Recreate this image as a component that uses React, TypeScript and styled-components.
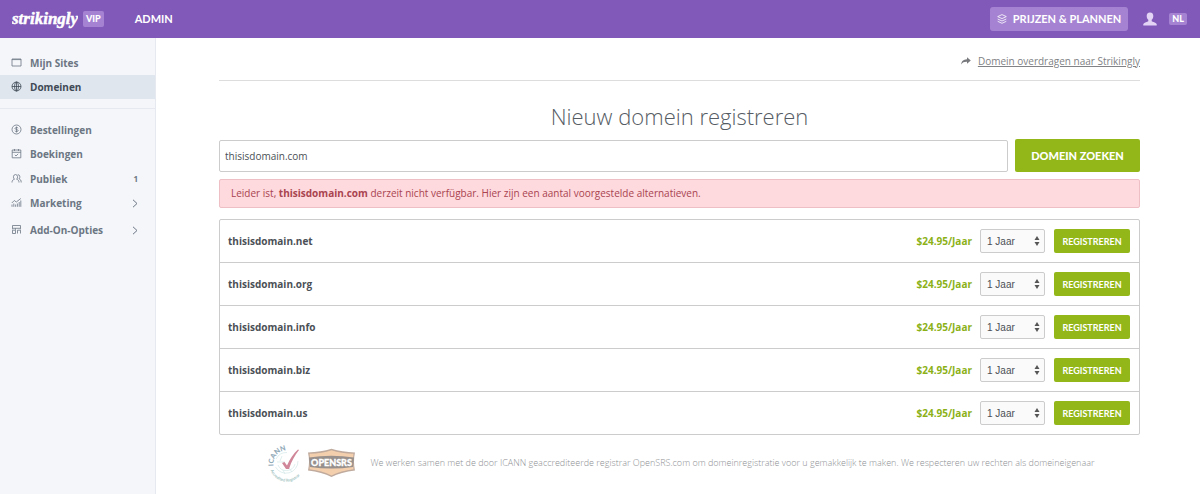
import React from 'react';
import styled, { createGlobalStyle } from 'styled-components';

const GlobalStyle = createGlobalStyle`
  *, *::before, *::after { box-sizing: border-box; }
  body {
    margin: 0;
    background: #fff;
    color: #4b5056;
    font: 400 10px/16px 'Open Sans', 'Noto Sans', sans-serif;
  }
  button, input, select { font: inherit; }
  a { color: inherit; text-decoration: none; }
`;

const Page = styled.div`
  display: flex;
  flex-direction: column;
  min-height: 100vh;
`;

const Header = styled.header`
  display: flex;
  align-items: center;
  height: 38px;
  padding: 0 13px 0 12px;
  background: #8159b8;
  color: #fff;
  font-family: Lato, sans-serif;
  font-weight: 700;
`;

const Logo = styled.a`
  display: flex;
  margin-right: 5px;
`;

const Tag = styled.span<{ $small?: boolean }>`
  padding: 0 3px;
  border-radius: 2px;
  background: #a583d2;
  font-size: 9px;
  font-weight: 900;
  line-height: ${p => (p.$small ? 12 : 16)}px;
`;

const AdminLink = styled.a`
  margin: 0 auto 0 31px;
  font-size: 11px;
`;

const PlansButton = styled.button`
  display: flex;
  align-items: center;
  gap: 6px;
  height: 24px;
  margin-right: 15px;
  padding: 0 7px;
  border: 0;
  border-radius: 3px;
  background: #a583d2;
  color: #fff;
  font-size: 11px;
  white-space: nowrap;
`;

const UserButton = styled.button`
  display: flex;
  margin-right: 12px;
  padding: 0;
  border: 0;
  background: none;
`;

const Body = styled.div`
  display: flex;
  flex: 1;
`;

const Sidebar = styled.nav`
  flex: none;
  width: 156px;
  padding-top: 13px;
  border-right: 1px solid #e6e9ef;
  background: #f4f6fa;
`;

const NavGroup = styled.div<{ $gap?: number; $divided?: boolean }>`
  margin-top: ${p => p.$gap ?? 0}px;
  padding-top: ${p => (p.$divided ? 9 : 0)}px;
  border-top: ${p => (p.$divided ? '1px solid #e6e9ef' : '0')};
`;

const NavItem = styled.a<{ $active?: boolean }>`
  display: flex;
  align-items: center;
  height: 24px;
  padding: 0 17px 0 11px;
  background: ${p => (p.$active ? '#dfe6ee' : 'transparent')};
  color: ${p => (p.$active ? '#3f4a56' : '#6c7683')};
  font-weight: 700;
  svg { flex: none; }
`;

const NavGlyph = styled.svg`
  margin-bottom: 2px;
`;

const NavLabel = styled.span`
  flex: 1;
  margin-left: 8px;
`;

const NavCount = styled.span`
  font-size: 8px;
`;

const Main = styled.main`
  flex: 1;
  min-width: 0;
  padding: 13px 60px 12px 63px;
`;

const TransferBar = styled.div`
  display: flex;
  justify-content: flex-end;
  align-items: center;
  gap: 7px;
  height: 30px;
  padding-bottom: 10px;
  border-bottom: 1px solid #ddd;
  color: #808285;
  a { text-decoration: underline; }
`;

const Title = styled.h1`
  margin: 20px 0 8px;
  color: #565c64;
  font-size: 22px;
  font-weight: 300;
  line-height: 30px;
  text-align: center;
`;

const SearchForm = styled.form`
  display: flex;
  align-items: center;
  gap: 7px;
`;

const SearchInput = styled.input`
  flex: 1;
  min-width: 0;
  height: 32px;
  padding: 0 5px;
  border: 1px solid #ccc;
  border-radius: 2px;
  color: #4b5056;
`;

const GreenButton = styled.button<{ $large?: boolean }>`
  flex: none;
  width: ${p => (p.$large ? 125 : 76)}px;
  height: ${p => (p.$large ? 33 : 24)}px;
  padding: 0;
  border: 0;
  border-radius: 2px;
  background: #93b719;
  color: #fff;
  font: ${p => (p.$large ? '900 11px' : '700 9px')} Lato, sans-serif;
`;

const Alert = styled.p`
  margin: 7px 0 11px;
  padding: 5px 11px 6px;
  border: 1px solid #eec0c5;
  border-radius: 2px;
  background: #fed9de;
  color: #a94450;
`;

const Results = styled.ul`
  margin: 0;
  padding: 0;
  border: 1px solid #ccc;
  border-radius: 2px;
  list-style: none;
`;

const ResultRow = styled.li`
  display: flex;
  align-items: center;
  height: 43px;
  padding: 0 9px 0 8px;
  border-top: 1px solid #ccc;
  &:first-child {
    height: 42px;
    border-top: 0;
  }
`;

const DomainName = styled.strong`
  flex: 1;
`;

const Price = styled.span`
  margin-right: 8px;
  color: #8cb118;
  font-weight: 700;
`;

const SelectBox = styled.span`
  position: relative;
  display: flex;
  margin-right: 9px;
  svg {
    position: absolute;
    top: 7px;
    right: 5px;
    pointer-events: none;
  }
`;

const YearSelect = styled.select`
  appearance: none;
  width: 65px;
  height: 24px;
  padding: 0 6px;
  border: 1px solid #ccc;
  border-radius: 2px;
  background: #fafafa;
  color: #4b5056;
  font: 10px 'Liberation Sans', sans-serif;
`;

const Partners = styled.footer`
  display: flex;
  justify-content: center;
  align-items: center;
  margin-top: 9px;
  color: #8d8f93;
  font-size: 9px;
  font-weight: 300;
`;

const PartnerText = styled.p`
  margin: 0 0 0 15px;
`;

const icons = {
  site: <path d="M1 2h9v7H1zM1 2.600h9" />,
  globe: <><circle cx="5.5" cy="5.5" r="4.5" /><ellipse cx="5.5" cy="5.5" rx="2" ry="4.5" /><path d="M1 5.500h9M5.500 1v9" /></>,
  coin: <><circle cx="5.5" cy="5.5" r="4.5" /><path d="M7.200 4.200c-.500-1-3.200-.900-3.200.300C4 5.800 7.200 5.200 7.200 6.600 7.200 7.800 4.400 7.800 3.800 6.800M5.500 2.500v6" /></>,
  calendar: <path d="M1.200 2h8.600v7.800H1.200zM1.200 4.300h8.600M3.500 1v2M7.500 1v2M3.800 6.800l1.200 1.200 2.200-2.200" />,
  people: <><path d="M1 9.500c0-2 .9-2.800 2.400-3.200C1.800 4.800 2.200 1.500 4.500 1.500S7.200 4.800 5.700 6.300C7.200 6.700 8 7.500 8 9.500" /><path d="M6.800 1.600c2.200 0 2.700 3 1.200 4.300 1.400.4 2.200 1.200 2.200 3.600" /></>,
  chart: <path d="M1 9.800V7.500M2.800 9.800V6.500M4.600 9.800V7.500M6.400 9.800V6.500M8.200 9.800V5M9.800 9.800V3.500M.8 6l2.500-2.500 2 1.500L9.800 1.500" />,
  addon: <path d="M1.500 1.500h8v2.800h-8zM1.500 4.300v1M9.500 4.300v1M1.500 6.200h3v3.300h-3zM6.500 9.500V6.200h3v3.300M4.500 4.300v1.500" />,
};

type IconName = keyof typeof icons;

const NavIcon = ({ name }: { name: IconName }) => (
  <NavGlyph width="11" height="11" viewBox="0 0 11 11" fill="none" stroke="currentColor" strokeWidth=".8" aria-hidden="true">
    {icons[name]}
  </NavGlyph>
);

const Chevron = () => (
  <svg width="6" height="9" viewBox="0 0 6 9" fill="none" stroke="currentColor" aria-hidden="true">
    <path d="M1 .8l4 3.700-4 3.700" />
  </svg>
);

type Item = { icon: IconName; label: string; active?: boolean; count?: number; expandable?: boolean };
const groups: { gap?: number; divided?: boolean; items: Item[] }[] = [
  { items: [{ icon: 'site', label: 'Mijn Sites' }, { icon: 'globe', label: 'Domeinen', active: true }] },
  { gap: 9, divided: true, items: [{ icon: 'coin', label: 'Bestellingen' }, { icon: 'calendar', label: 'Boekingen' }] },
  { gap: 1, items: [{ icon: 'people', label: 'Publiek', count: 1 }, { icon: 'chart', label: 'Marketing', expandable: true }] },
  { gap: 3, items: [{ icon: 'addon', label: 'Add-On-Opties', expandable: true }] },
];

const domains = ['net', 'org', 'info', 'biz', 'us'].map(tld => `thisisdomain.${tld}`);

const IcannBadge = () => (
  <svg width="42" height="38" viewBox="0 0 42 38" role="img" aria-label="ICANN Accredited Registrar">
    <defs>
      <path id="icann-top" d="M8.500 22A13.500 13.500 0 0 1 31 10" />
      <path id="icann-bottom" d="M5.500 26A17 17 0 0 0 38 15" />
    </defs>
    <g fill="none" stroke="#d3e6e6" strokeWidth=".7">
      <path d="M10.500 23A12 12 0 0 0 33 17M11 15A12 12 0 0 1 22 8.500" />
      <path d="M13 21A9 9 0 0 0 30 20M12 18h8M17 12l-2 5M18 26l2 4M24 24l3 4" />
    </g>
    <text fontFamily="Lato, sans-serif" fontSize="7" fontWeight="900" fill="#91aab8">
      <textPath href="#icann-top">ICANN</textPath>
    </text>
    <text fontFamily="Lato, sans-serif" fontSize="4" fontWeight="700" fill="#9fc4c2">
      <textPath href="#icann-bottom">Accredited Registrar</textPath>
    </text>
    <path d="M17 19l2.500-1 2.500 3.500C24.500 15.500 28.500 9.500 33 5.500l1 .500c-4 5-7.500 11-10 19h-3z" fill="#cf8799" />
  </svg>
);

const OpenSrsBadge = () => (
  <svg width="49" height="30" viewBox="0 0 49 30" role="img" aria-label="OpenSRS">
    <path d="M1 4.500Q14 4 24.500.8 35 4 48 4.500q-2 9 0 18Q34 24 24.500 29 15 24 1 22.500q2-9 0-18z" fill="#bfaa9d" />
    <path d="M2.500 5.800Q15 5.500 24.500 2.300 34 5.500 46.500 5.800q-1.500 7.700 0 15.400Q34 22.500 24.500 27.500 15 22.500 2.500 21.200q1.500-7.700 0-15.400z" fill="#f4cfad" />
    <path d="M2 9.500q22-3.500 45 0l-1 9.500Q24.500 22 3 19z" fill="#97908c" />
    <text x="24.500" y="18" textAnchor="middle" fontFamily="Lato, sans-serif" fontSize="9" fontWeight="900" fill="#fff" stroke="#fff" strokeWidth=".3">OPENSRS</text>
  </svg>
);

export default function App() {
  return (
    <Page>
      <GlobalStyle />
      <Header>
        <Logo href="#" aria-label="strikingly">
          <svg width="66" height="26" viewBox="0 0 66 26" aria-hidden="true">
            <text x="0" y="18" fontFamily="'Liberation Serif', serif" fontSize="17" fontWeight="700" fontStyle="italic" fill="#fff" stroke="#fff" strokeWidth=".5">strikingly</text>
          </svg>
        </Logo>
        <Tag>VIP</Tag>
        <AdminLink href="#">ADMIN</AdminLink>
        <PlansButton type="button">
          <svg width="10" height="10" viewBox="0 0 10 10" fill="none" stroke="#fff" strokeWidth=".8" aria-hidden="true">
            <path d="M5 .6l4.300 2L5 4.600.700 2.600zM.700 5L5 7l4.300-2M.700 7.300L5 9.300l4.300-2" />
          </svg>
          PRIJZEN &amp; PLANNEN
        </PlansButton>
        <UserButton type="button" aria-label="Account">
          <svg width="14" height="14" viewBox="0 0 14 14" fill="#e3d4f5" aria-hidden="true">
            <path d="M7 .5c2.300 0 3.500 1.500 3.300 3.700C10.200 6 9.500 7 8.700 7.800v1.500c1 1 4 1 5 2.700v1.500H.3V12c1-1.700 4-1.700 5-2.700V7.800C4.500 7 3.800 6 3.700 4.200 3.500 2 4.700.5 7 .5z" />
          </svg>
        </UserButton>
        <Tag $small>NL</Tag>
      </Header>
      <Body>
        <Sidebar>
          {groups.map((group, i) => (
            <NavGroup key={i} $gap={group.gap} $divided={group.divided}>
              {group.items.map(item => (
                <NavItem key={item.label} href="#" $active={item.active}>
                  <NavIcon name={item.icon} />
                  <NavLabel>{item.label}</NavLabel>
                  {item.count && <NavCount>{item.count}</NavCount>}
                  {item.expandable && <Chevron />}
                </NavItem>
              ))}
            </NavGroup>
          ))}
        </Sidebar>
        <Main>
          <TransferBar>
            <svg width="10" height="8" viewBox="0 0 10 8" fill="#77797c" aria-hidden="true">
              <path d="M6 .3L9.800 3.500 6 6.700V4.800C3.300 4.700 1.500 5.200.200 7.500.400 4.500 2.200 2.300 6 2.200z" />
            </svg>
            <a href="#">Domein overdragen naar Strikingly</a>
          </TransferBar>
          <Title>Nieuw domein registreren</Title>
          <SearchForm onSubmit={e => e.preventDefault()}>
            <SearchInput aria-label="Domein" defaultValue="thisisdomain.com" />
            <GreenButton $large type="submit">DOMEIN ZOEKEN</GreenButton>
          </SearchForm>
          <Alert>
            Leider ist, <strong>thisisdomain.com</strong> derzeit nicht verfügbar. Hier zijn een aantal voorgestelde alternatieven.
          </Alert>
          <Results>
            {domains.map(domain => (
              <ResultRow key={domain}>
                <DomainName>{domain}</DomainName>
                <Price>$24.95/Jaar</Price>
                <SelectBox>
                  <YearSelect aria-label={`Periode voor ${domain}`}>
                    <option>1 Jaar</option>
                  </YearSelect>
                  <svg width="6" height="10" viewBox="0 0 6 10" fill="#555" aria-hidden="true">
                    <path d="M.5 4L3 0l2.500 4zM.5 6L3 10l2.500-4z" />
                  </svg>
                </SelectBox>
                <GreenButton type="button">REGISTREREN</GreenButton>
              </ResultRow>
            ))}
          </Results>
          <Partners>
            <IcannBadge />
            <OpenSrsBadge />
            <PartnerText>
              We werken samen met de door ICANN geaccrediteerde registrar OpenSRS.com om domeinregistratie voor u gemakkelijk te maken. We respecteren uw rechten als domeineigenaar
            </PartnerText>
          </Partners>
        </Main>
      </Body>
    </Page>
  );
}
